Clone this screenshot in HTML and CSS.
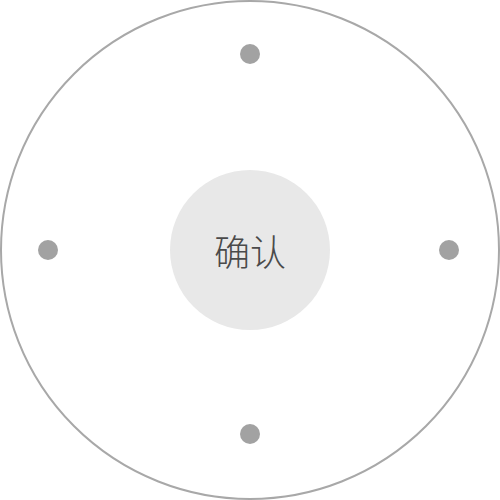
FILE: index.html
```html
<!DOCTYPE html>
<html lang="zh">
<head>
<meta charset="utf-8">
<link rel="stylesheet" href="styles.css">
</head>
<body>
<div class="pad">
  <span class="dot dot-up"></span>
  <span class="dot dot-left"></span>
  <button class="ok">确认</button>
  <span class="dot dot-right"></span>
  <span class="dot dot-down"></span>
</div>
</body>
</html>
```
FILE: styles.css
```css
html, body {
  margin: 0;
  padding: 0;
  background: #ffffff;
}
.pad {
  box-sizing: border-box;
  width: 500px;
  height: 500px;
  border: 2px solid #a8a8a8;
  border-radius: 50%;
  display: grid;
  grid-template-columns: 36px 20px 1fr 20px 39px;
  grid-template-rows: 42px 20px 1fr 20px 54px;
}
.dot {
  width: 20px;
  height: 20px;
  border-radius: 50%;
  background: #a2a2a2;
}
.dot-up {
  grid-area: 2 / 1 / 3 / -1;
  justify-self: center;
}
.dot-down {
  grid-area: 4 / 1 / 5 / -1;
  justify-self: center;
}
.dot-left {
  grid-area: 1 / 2 / -1 / 3;
  align-self: center;
}
.dot-right {
  grid-area: 1 / 4 / -1 / 5;
  align-self: center;
}
.ok {
  grid-area: 1 / 1 / -1 / -1;
  place-self: center;
  width: 160px;
  height: 160px;
  border: none;
  border-radius: 50%;
  background: #e8e8e8;
  color: #4a4a4a;
  font-family: "Noto Sans CJK SC", "Noto Sans", sans-serif;
  font-size: 36px;
  font-weight: 300;
  line-height: 1;
  padding: 0;
  display: flex;
  align-items: center;
  justify-content: center;
}
```
